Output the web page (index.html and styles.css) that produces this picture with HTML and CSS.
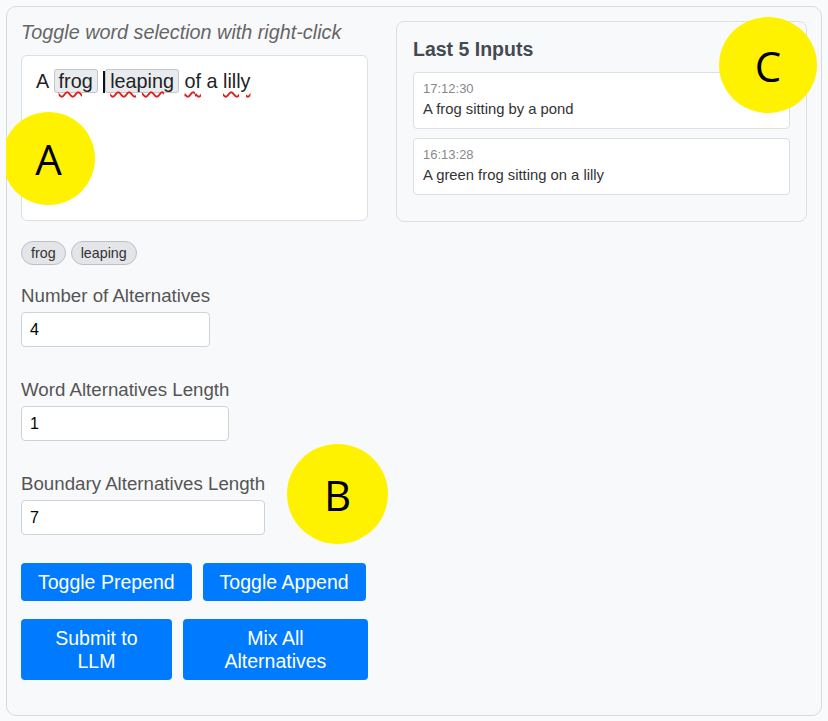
FILE: index.html
```html
<!DOCTYPE html>
<html>
<head>
<meta charset="utf-8">
<link rel="stylesheet" href="styles.css">
</head>
<body>
<div class="app">
  <div class="left">
    <div class="hint">Toggle word selection with right-click</div>
    <div class="editor">A <span class="word sp">frog</span> <span class="caret"></span><span class="word sp">leaping</span> <span class="sp">of</span> a <span class="sp">lilly</span></div>
    <div class="chips">
      <span class="chip">frog</span>
      <span class="chip">leaping</span>
    </div>
    <div class="field">
      <label>Number of Alternatives</label>
      <input type="text" value="4">
    </div>
    <div class="field">
      <label>Word Alternatives Length</label>
      <input type="text" value="1">
    </div>
    <div class="field last">
      <label>Boundary Alternatives Length</label>
      <input type="text" value="7">
    </div>
    <div class="btn-row first">
      <button class="btn">Toggle Prepend</button>
      <button class="btn">Toggle Append</button>
    </div>
    <div class="btn-row">
      <button class="btn">Submit to LLM</button>
      <button class="btn">Mix All Alternatives</button>
    </div>
  </div>
  <div class="history">
    <h3>Last 5 Inputs</h3>
    <div class="entry">
      <div class="time">17:12:30</div>
      <div class="text">A frog sitting by a pond</div>
    </div>
    <div class="entry">
      <div class="time">16:13:28</div>
      <div class="text">A green frog sitting on a lilly</div>
    </div>
  </div>
</div>
<div class="marker m-a">A</div>
<div class="marker m-b">B</div>
<div class="marker m-c">C</div>
</body>
</html>
```
FILE: styles.css
```css
html, body {
  background: #f9fafb;
}
body {
  margin: 6px;
  font-family: "Liberation Sans", Arial, sans-serif;
  position: relative;
}
.app {
  display: grid;
  grid-template-columns: 347px 1fr;
  column-gap: 28px;
  align-items: start;
  background: #f8f9fa;
  border: 1px solid #d6d9de;
  border-radius: 10px;
  padding: 14px 14px 35px 14px;
}
.left {
  display: flex;
  flex-direction: column;
  align-items: flex-start;
}
.hint {
  font-style: italic;
  font-size: 19.8px;
  line-height: 23px;
  color: #666;
  margin-bottom: 11px;
}
.editor {
  box-sizing: border-box;
  width: 347px;
  height: 166px;
  background: #fff;
  border: 1px solid #dcdfe3;
  border-radius: 6px;
  padding: 13px 14px;
  font-size: 19.8px;
  line-height: 24px;
  color: #222;
  margin-bottom: 20px;
}
.word {
  background: #e9ecef;
  border: 1px solid #c4c8cd;
  border-radius: 3px;
  padding: 0 4px;
}
.sp {
  text-decoration: underline wavy #e0201a;
  text-decoration-thickness: 1.5px;
  text-underline-offset: 3px;
}
.caret {
  display: inline-block;
  width: 2px;
  height: 22px;
  background: #111;
  vertical-align: -5px;
}
.chips {
  display: flex;
  gap: 5px;
  margin-bottom: 20px;
}
.chip {
  font-size: 14.3px;
  line-height: 22px;
  color: #333;
  background: #e3e5e9;
  border: 1px solid #bcc0c6;
  border-radius: 12px;
  padding: 0 9px;
}
.field {
  display: flex;
  flex-direction: column;
  width: max-content;
  margin-bottom: 32px;
}
.field.last {
  margin-bottom: 28px;
}
.field label {
  font-size: 18.7px;
  line-height: 21px;
  color: #555;
  margin-bottom: 6px;
}
.field input {
  box-sizing: border-box;
  width: 0;
  min-width: 100%;
  height: 35px;
  border: 1px solid #cfd2d6;
  border-radius: 4px;
  background: #fff;
  padding: 0 8px;
  font-family: "Liberation Sans", Arial, sans-serif;
  font-size: 16px;
  color: #000;
}
.btn-row {
  display: flex;
  gap: 11px;
  width: 347px;
}
.btn-row.first {
  margin-bottom: 18px;
}
.btn {
  background: #007bff;
  color: #fff;
  border: none;
  border-radius: 4px;
  font-family: "Liberation Sans", Arial, sans-serif;
  font-size: 19.5px;
  line-height: 23px;
  padding: 7.5px 17px;
  text-align: center;
}
.history {
  background: #f8f9fa;
  border: 1px solid #dcdfe3;
  border-radius: 8px;
  padding: 16px;
}
.history h3 {
  margin: 0 0 12px 0;
  font-size: 19.5px;
  line-height: 22px;
  font-weight: bold;
  color: #444a52;
}
.entry {
  background: #fff;
  border: 1px solid #dcdfe3;
  border-radius: 4px;
  padding: 8px 9px 10px 9px;
  margin-bottom: 9px;
}
.entry:last-child {
  margin-bottom: 10px;
}
.time {
  font-size: 13px;
  line-height: 16px;
  color: #888;
  margin-bottom: 3px;
}
.text {
  font-size: 14.8px;
  line-height: 18px;
  color: #333;
}
.marker {
  position: absolute;
  border-radius: 50%;
  background: #fff200;
  color: #000;
  font-family: "Open Sans", "Liberation Sans", sans-serif;
  font-size: 42px;
  display: flex;
  align-items: center;
  justify-content: center;
}
.m-a {
  left: -4px;
  top: 106px;
  width: 93px;
  height: 93px;
}
.m-b {
  left: 281px;
  top: 438px;
  width: 101px;
  height: 100px;
}
.m-c {
  left: 713px;
  top: 11px;
  width: 98px;
  height: 96px;
}
```
